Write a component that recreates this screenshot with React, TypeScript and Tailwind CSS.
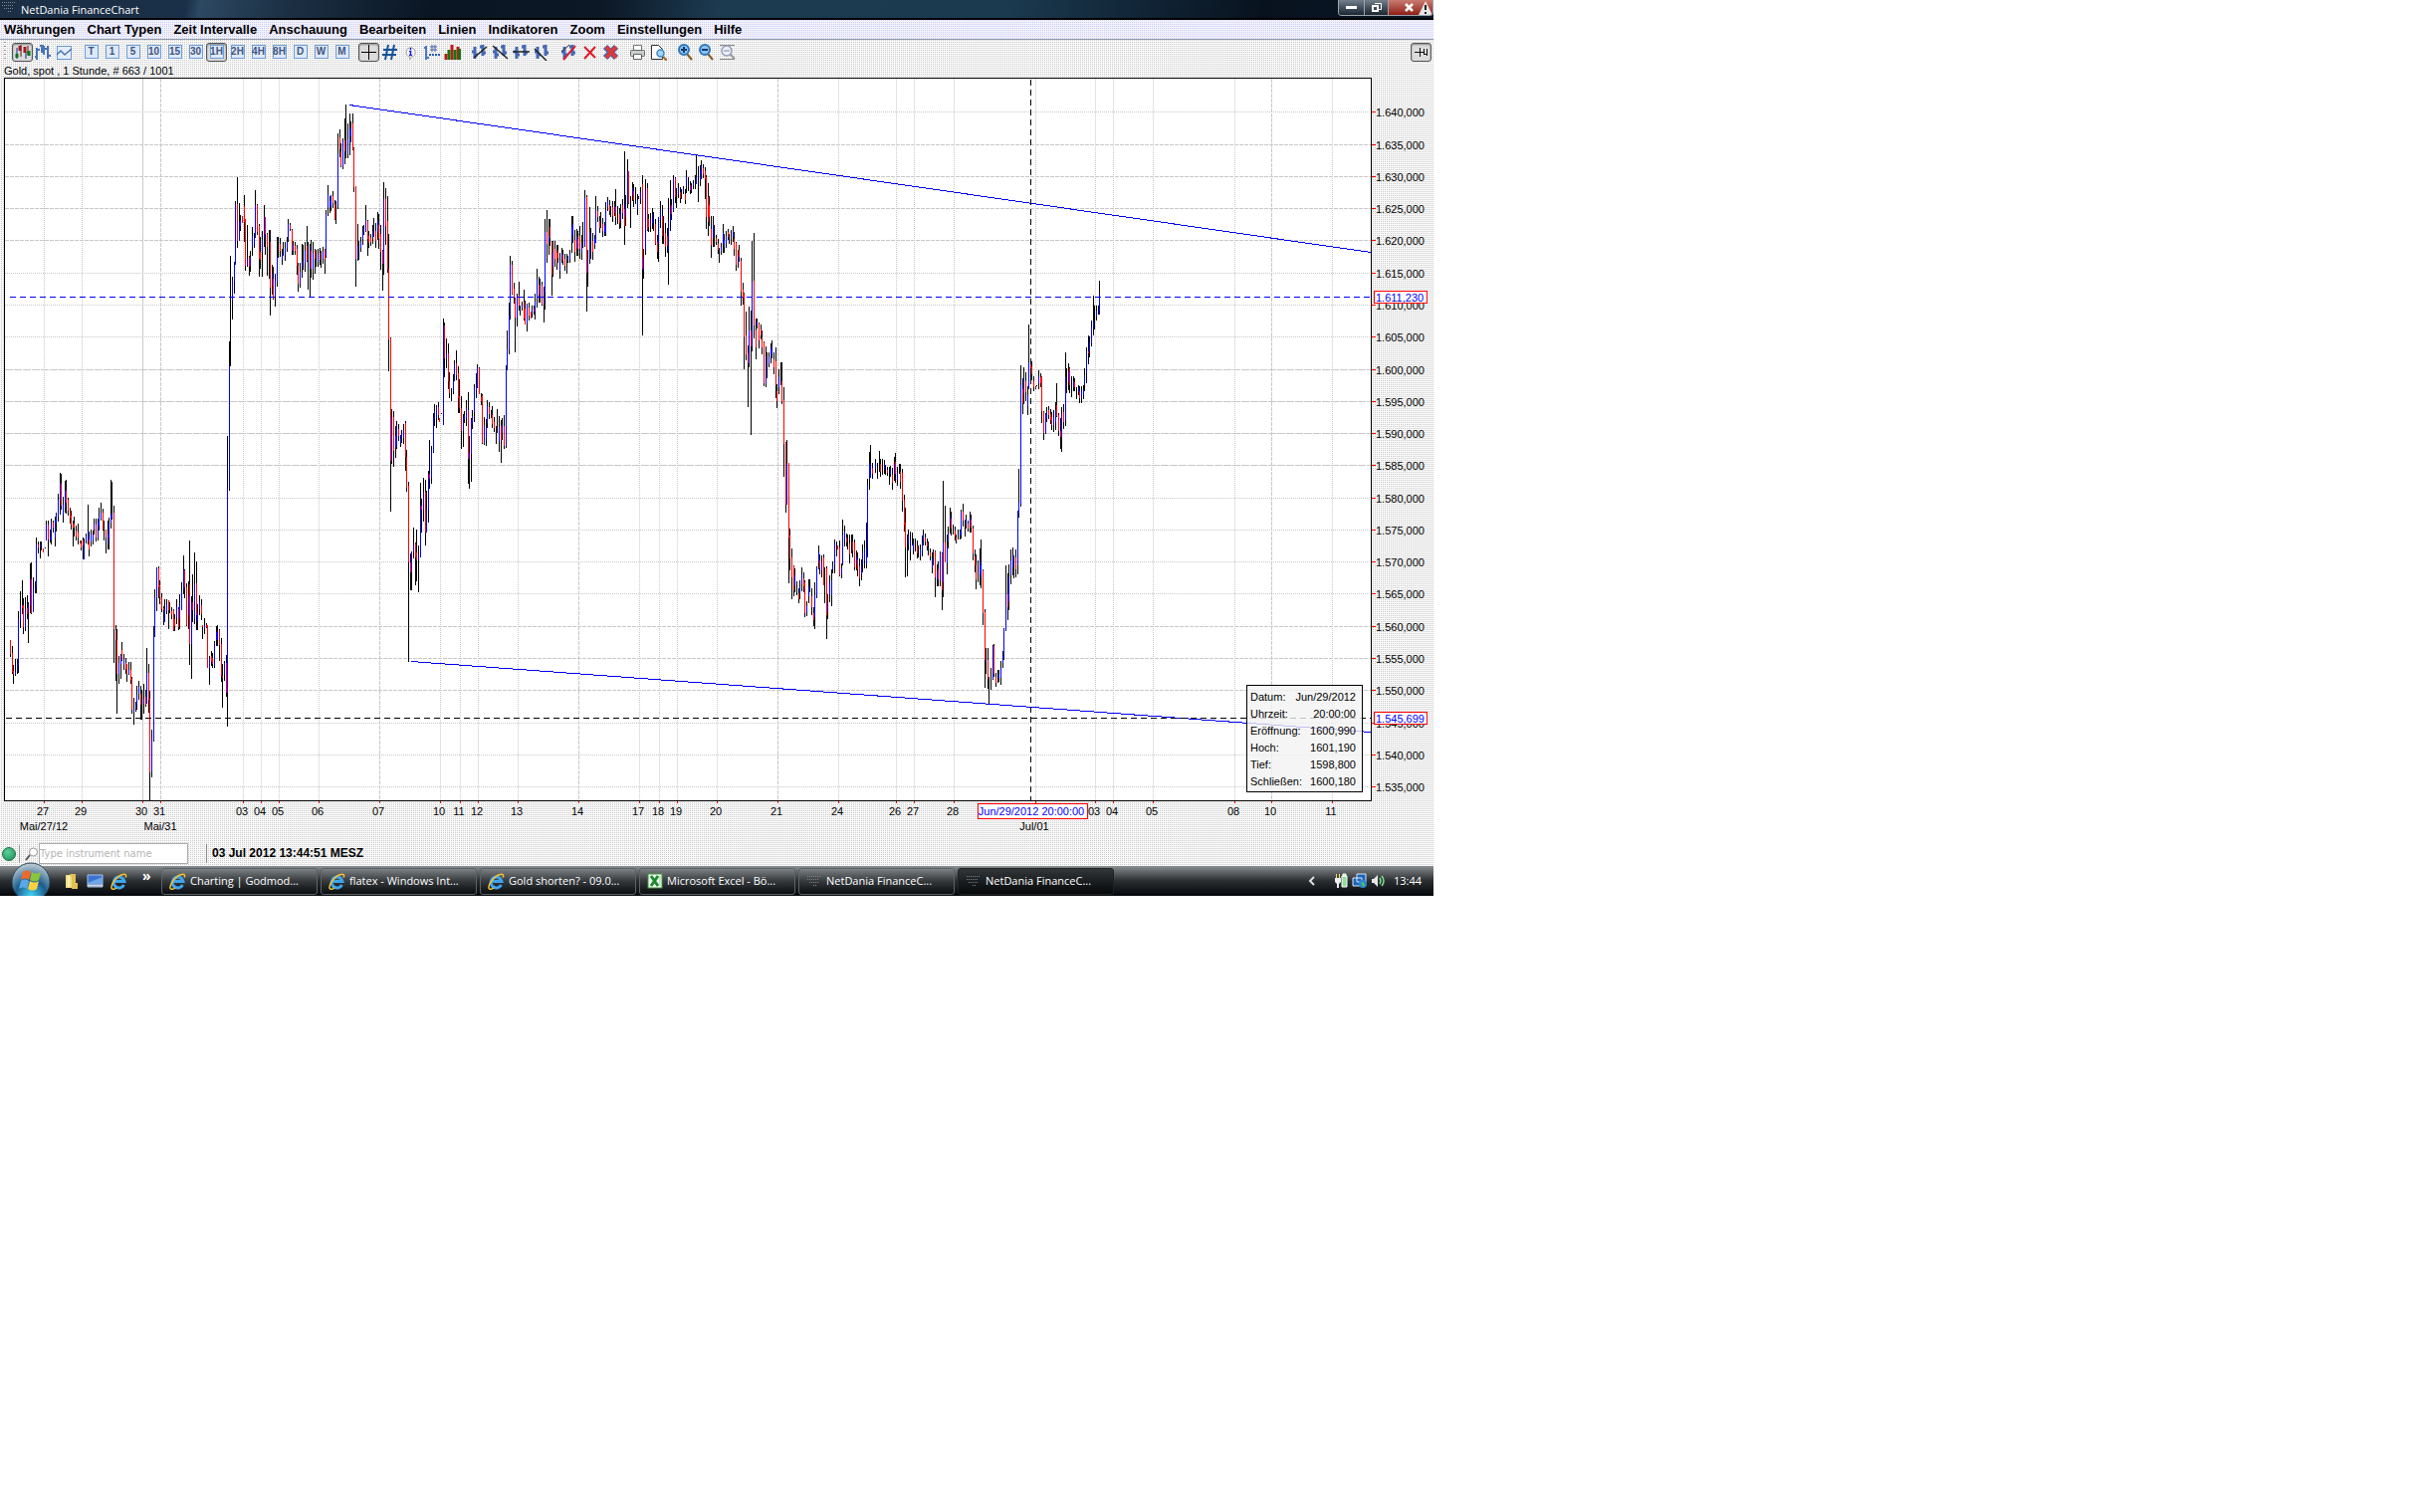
import type { ReactNode } from "react"
import clsx from "clsx"

type Dash = "dots" | "dash" | "long" | "solid"

const MENU = [
  "Währungen",
  "Chart Typen",
  "Zeit Intervalle",
  "Anschauung",
  "Bearbeiten",
  "Linien",
  "Indikatoren",
  "Zoom",
  "Einstellungen",
  "Hilfe",
]

const INTERVALS = ["T", "1", "5", "10", "15", "30", "1H", "2H", "4H", "8H", "D", "W", "M"]

const DASHES: Record<Dash, string | undefined> = {
  dots: "1 1",
  dash: "4 1",
  long: "8 1",
  solid: undefined,
}

const PRICES: [number, string, Dash][] = [
  [112, "1.640,000", "dots"],
  [145, "1.635,000", "dash"],
  [177, "1.630,000", "dash"],
  [209, "1.625,000", "dash"],
  [241, "1.620,000", "dash"],
  [274, "1.615,000", "dots"],
  [306, "1.610,000", "dots"],
  [338, "1.605,000", "dots"],
  [371, "1.600,000", "long"],
  [403, "1.595,000", "long"],
  [435, "1.590,000", "long"],
  [467, "1.585,000", "long"],
  [500, "1.580,000", "dots"],
  [532, "1.575,000", "dots"],
  [564, "1.570,000", "dots"],
  [596, "1.565,000", "dots"],
  [629, "1.560,000", "dash"],
  [661, "1.555,000", "dash"],
  [693, "1.550,000", "dash"],
  [726, "1.545,000", "dots"],
  [758, "1.540,000", "dots"],
  [790, "1.535,000", "dots"],
]

const DAYS: [number, string, Dash][] = [
  [44, "27", "dots"],
  [82, "29", "dots"],
  [143, "30", "solid"],
  [161, "31", "dash"],
  [244, "03", "dots"],
  [262, "04", "dots"],
  [280, "05", "dots"],
  [320, "06", "dots"],
  [381, "07", "dash"],
  [442, "10", "dots"],
  [462, "11", "dots"],
  [480, "12", "dots"],
  [520, "13", "dots"],
  [581, "14", "dash"],
  [642, "17", "dots"],
  [662, "18", "dots"],
  [680, "19", "dots"],
  [720, "20", "dots"],
  [781, "21", "dash"],
  [842, "24", "dots"],
  [900, "26", "dots"],
  [918, "27", "dots"],
  [958, "28", "dots"],
  [1040, "", "dots"],
  [1100, "03", "dots"],
  [1118, "04", "dots"],
  [1158, "05", "dots"],
  [1240, "08", "dots"],
  [1277, "10", "dash"],
  [1338, "11", "dots"],
]

// One bar each: x, high, low, direction (u, d or n), then the body when it is known
const BARS = `
10 643 660 d 643 657;12 649 677 d 656 675;13 668 687 d 674 677;15 662 679 u 675 677;17 662 677 u 667 675
18 614 676 u 622 668;20 594 631 u 608 623;22 583 617 d 608 611;23 601 637 d 608 630;25 600 634 u 612 630
27 598 622 d 611 617;28 605 646 u 607 615;30 566 616 u 582 608;31 565 617 d 582 616;33 580 615 u 592 615
35 584 596 u 590 593;36 540 596 u 547 590;38 544 556 d 547 550;40 544 561 u 547 550;41 544 553 n
43 551 555 d 551 555;45 550 551 n;46 523 543 u 527 543;48 523 559 d 527 542;50 532 545 u 540 543
51 521 547 u 525 542;53 523 535 d 525 530;55 519 549 u 523 540;56 515 534 u 517 525;58 496 524 u 503 518
60 475 517 u 485 503;61 476 512 d 486 508;63 499 525 u;65 483 515 u 493 510;66 482 516 d 493 505
68 500 518 d 502 513;70 510 526 d 513 520;71 513 532 d 518 527;73 523 549 d 526 530;74 519 539 d 526 530
76 528 543 d;78 526 547 d 535 540;80 543 546 d 543 546;81 543 553 d;83 540 562 d 543 548
84 541 562 u 545 562;86 536 546 u;88 507 547 u 533 545;89 534 559 d;91 532 549 u;93 533 547 u
94 521 537 u;96 521 544 d 527 540;98 521 543 u 525 540;99 510 533 u 520 528;101 505 523 u 515 521
103 511 533 d 515 532;104 523 543 n;106 532 556 d 532 540;108 523 552 u 537 547;109 520 552 u 525 540
111 482 531 u 517 525;112 484 522 u 515 520;114 508 666 d 515 632;116 628 684 d 633 643;117 632 717 d 643 677
119 659 687 u 666 677;121 657 682 u 658 667;122 645 664 d 653 663;124 657 673 u;126 661 677 d
127 667 685 d 667 677;129 665 678 u 673 677;131 665 687 d 673 683;132 680 717 d 682 713;134 701 728 u 713 715
136 705 715 u;137 689 713 u 698 708;139 684 703 u;141 689 723 d 697 708;142 693 723 n
144 687 717 u 702 707;146 693 710 d 700 708;147 651 707 u 676 707;149 667 716 d 676 703;150 694 804 d 702 776
152 733 781 u 743 775;154 629 745 u 638 743;155 592 640 u 600 638;157 570 614 u 571 600;159 569 601 d 571 590
160 583 607 d 588 600;162 596 615 d 600 612;164 609 628 d 611 613;165 602 625 u 612 625;167 602 617 u
169 603 632 d 603 613;170 605 616 n;172 610 622 d;174 612 634 d 613 633;175 617 634 d;177 602 627 u
179 610 633 d 612 630;180 597 632 u;182 585 613 u 593 613;184 558 597 u 573 592;185 572 601 d 573 590
187 586 629 d 590 628;189 584 632 u;190 543 668 d 587 647;192 599 682 u 605 647;193 577 625 d 605 613
195 555 627 u 587 622;197 564 633 d 586 618;198 607 633 u;200 598 618 u;202 602 623 d;203 628 642 d 628 630
205 621 637 u 628 631;207 626 631 d;208 628 671 d 628 671;210 659 688 u 661 671;212 654 669 d;213 656 671 d
215 644 671 u 646 669;217 629 649 u;218 628 649 u;220 632 664 d 633 648;222 641 685 d 647 679;223 667 711 d 679 681
225 664 684 u 666 678;227 658 700 d 666 696;228 438 730 u 491 696
230 343 493 u 367 491;231 257 368 n;233 278 321 u 281 302;235 263 295 u 266 283;236 202 266 u 205 266
238 178 249 d 205 242;240 204 242 u 223 242;241 216 232 u;243 217 224 d 217 224;245 196 243 d 207 223
246 220 272 d 220 267;248 226 268 u 260 267;250 257 277 d 258 268;251 252 273 u;253 228 257 u;255 234 249 u
256 191 239 u 206 238;258 205 236 d 206 233;260 225 278 d 227 260;261 238 270 d 253 261;263 232 278 u 241 253
265 206 248 u 218 240;266 218 256 d 218 235;268 234 277 d 235 248;270 231 280 n;271 231 317 d 243 289
273 266 296 u;274 268 301 d 280 300;276 275 308 u 282 298;278 238 288 u 258 283;279 238 259 n;281 239 258 d
283 250 266 u;284 243 257 n;286 243 262 u;288 238 253 u;289 220 243 u 225 240;291 224 232 d
293 230 256 d 231 252;294 242 256 u;296 243 256 d;298 246 276 d 250 267;299 264 293 d 267 285
301 264 289 u 273 285;303 245 279 u 262 270;304 246 271 n;306 243 273 u;308 227 263 d 247 262;309 243 291 n
311 245 298 u 247 270;312 241 279 d 252 270;314 243 281 u;316 250 275 d 251 260;317 251 268 n;319 250 268 u
321 249 266 d;322 252 269 n;324 248 265 u;326 250 275 d 251 260;327 211 259 u 215 258;329 186 217 u
331 197 214 u;332 196 212 u 196 206;334 192 209 d;336 201 221 d 205 220;337 202 225 n;339 134 210 u 154 207
341 130 158 d;342 144 168 d 152 167;344 139 170 u 142 167;346 119 165 d 141 152;347 105 159 n
349 124 159 u 140 155;351 114 156 u 130 143;352 122 143 u;354 114 151 d 124 150;355 148 193 d 149 188
357 187 288 d 187 260;359 225 262 u 247 260;360 242 261 n;362 238 253 u;364 227 246 u;365 226 236 u
367 206 233 u 221 232;369 221 257 d 222 240;370 232 249 d;372 235 247 d;374 226 245 u;375 219 238 n
377 224 249 d;379 213 241 u;380 215 250 d;382 226 271 d 235 253;384 251 292 d 252 265;385 183 276 u 200 265
387 189 246 d 200 227;389 197 274 d 222 270;390 235 373 d 270 341;392 339 514 d 340 463
393 411 466 u 419 463;395 413 469 d 419 453;397 428 460 u;398 423 451 u 427 448;400 426 443 d;402 437 449 u
403 432 445 u;405 426 446 u;407 423 473 d 425 459;408 452 494 d 459 490;410 484 665 d 488 565
412 556 593 d 565 575;413 554 593 u 555 575;415 530 561 u 547 555;417 545 588 d 546 560;418 532 584 d 555 563
420 548 595 u 557 563;422 485 560 u 508 559;423 501 535 d 508 512;425 480 524 u 494 512;427 482 548 d 494 535
428 493 535 u 511 535;430 473 525 u 476 512;431 442 491 d 476 481;433 448 486 u 453 480;435 415 455 u 420 454
436 406 428 u;438 407 430 u 408 420;440 404 422 d;441 420 424 d 420 424;443 415 416 n;445 320 427 u 327 427
446 324 379 d 327 360;448 340 370 u 355 360;450 345 391 d 355 383;451 374 400 d 383 395;453 390 403 n
455 376 396 u 383 393;456 362 383 u 365 383;458 352 382 d 365 377;460 368 415 d 375 400;461 381 415 d 398 410
463 398 451 d 410 433;465 416 449 u 420 433;466 413 425 u;468 402 428 u;470 394 486 d 412 461
471 438 491 u 455 461;473 420 484 u 422 456;474 412 431 u;476 386 424 u 390 415;478 375 400 u 387 392
479 366 390 u 369 388;481 369 396 d 370 396;483 395 407 d;484 396 446 d 397 445;486 419 447 u 427 445
488 421 448 u;489 402 430 u 408 425;491 404 421 d;493 412 420 n;494 408 430 d 417 426;496 419 434 d
498 428 446 n;499 411 435 n;501 418 454 u;503 422 465 d 428 442;504 420 442 u;506 417 451 d 428 448
508 367 450 u 371 448;509 332 372 u 351 371;511 304 356 u 317 351;512 257 321 u 266 317;514 262 296 d 266 295
516 284 305 d;517 299 354 d 300 319;519 295 328 u 297 319;521 283 312 d 297 307;522 307 317 n;524 303 312 u
526 291 322 d 303 320;527 302 326 d 310 326;529 305 333 u 306 325;531 304 322 d;533 313 320 d 313 320
534 307 319 u;536 307 316 d;537 295 321 u;539 270 309 u 280 300;541 278 304 d;542 280 304 u;544 283 307 d 286 306
546 288 324 u 292 306;547 220 311 u 233 293;549 211 264 d 233 245;551 220 256 u 237 243;552 220 247 d
554 242 297 d 243 276;555 242 278 u;557 242 268 d;559 246 271 d;560 246 264 d;562 254 280 u;564 249 264 u
565 251 266 d;567 255 272 d;569 255 275 n;570 257 264 u;572 251 264 u;574 217 254 u;575 217 244 u
577 231 263 d;579 230 257 u;580 232 257 d;582 227 260 d;584 236 261 u;585 223 249 n;587 191 248 u 199 247
589 196 313 d 198 274;590 251 288 u 260 273;592 208 265 u 233 260;593 229 260 n;595 234 261 d;597 236 250 u
598 197 244 u 211 243;600 207 223 d;602 217 234 d;603 213 229 n;605 219 238 d;607 223 237 u;608 203 237 u 211 235
610 198 212 u;612 201 216 d;613 207 218 n;615 202 223 d;617 202 217 u;618 190 226 d 208 218;620 207 225 n
622 209 230 d;623 205 229 u;625 200 220 d;627 152 246 d 210 227;628 196 227 u;630 160 209 u 172 205
631 172 205 d 172 204;633 197 229 n;635 183 202 u;636 185 208 d;638 188 205 n;640 195 216 u;641 197 200 d
643 188 205 u;645 176 337 d 185 270;646 250 280 u;648 180 256 u 190 251;650 184 232 d 189 231;651 215 233 d
653 214 233 u;655 209 230 u;656 213 232 n;658 220 246 d 225 245;660 236 260 d;661 218 263 u 218 245
663 202 229 u;665 206 245 d 217 237;666 217 245 n;668 224 258 d;670 229 254 d;671 199 286 u 221 252
673 181 232 u 207 222;674 200 221 d;676 176 213 u 179 212;678 178 204 d 179 198;679 189 209 n;681 184 199 u
683 188 204 d;684 190 200 n;686 187 195 u;688 190 205 d;689 171 194 u;691 178 192 n;693 182 195 d;694 184 194 u
696 181 190 u;698 176 190 n;699 155 185 u 178 185;701 167 203 n;703 166 187 u;704 161 180 u;706 165 179 d
708 168 200 d 172 180;709 176 230 d 178 218;711 184 237 d 198 223;712 197 227 d;714 217 259 d;716 217 248 u
717 226 248 n;719 236 246 d;721 240 255 d;722 249 264 n;724 244 256 u;726 225 254 u;727 235 254 u;729 232 249 u
731 230 241 d;732 235 245 n;734 231 246 n;736 227 243 u;737 233 257 d;739 243 272 d 244 266;741 251 269 u
742 246 263 d;744 259 307 d 262 293;746 284 306 d;747 294 371 d 295 338;749 313 362 d 337 356;751 347 409 d 355 365
752 308 369 u 332 365;754 312 437 d 332 348;755 242 353 u 283 348;757 234 340 d 282 327;759 320 361 d;760 320 330 u
762 324 350 d 325 342;764 326 341 d;765 332 356 d;767 343 388 d 344 385;769 348 389 u 358 386;770 354 380 n
772 354 369 u;774 345 365 u;775 342 360 u;777 354 376 d;779 349 400 d 363 387;780 386 410 d;782 371 396 u
784 364 387 n;785 364 406 d 383 403;787 389 479 d 402 446
789 444 515 d 445 507;790 442 507 u 466 507;792 465 586 d 465 540;793 531 573 d 538 561;795 551 602 d 560 580
797 568 599 d 569 593;798 571 595 u;800 584 598 n;802 591 606 d;803 583 602 u;805 570 594 u;807 575 595 d
808 583 620 d 585 616;810 604 619 u;812 582 606 u;813 582 595 n;815 591 618 d;817 610 629 d;818 585 632 u 598 620
820 569 601 u 570 598;822 548 572 u;823 557 577 d;825 558 580 u;827 557 588 d 560 588;828 570 606 n
830 569 642 d 571 618;831 597 622 u;833 578 605 u;835 572 609 u;836 564 576 u;838 542 576 u 546 567
840 544 559 n;841 548 552 d 548 552;843 543 579 d 550 578;845 566 581 u;846 522 568 u 537 567;848 528 549 u
850 536 549 d;851 537 552 n;853 537 566 d;855 537 556 n;856 537 560 d;858 542 573 d 545 570;860 553 573 u
861 555 579 d;863 561 589 d;865 562 583 u;866 547 575 u;868 543 571 u;870 525 571 u 550 567;871 481 560 u 487 550
873 454 492 u;874 447 480 u 467 480;876 465 481 d;879 461 475 u;881 465 481 n;883 453 474 n;884 461 479 d
886 461 477 n;888 462 476 u;889 467 477 n;891 469 478 d;893 469 487 n;894 468 479 u;896 470 492 d;898 459 483 u
899 455 485 d;901 469 488 u;903 466 476 n;904 466 491 d;906 471 514 d 475 503;908 497 534 d 502 527
909 510 580 d 525 550;911 537 579 n;912 532 553 u;914 534 563 u;916 535 548 n;917 541 557 u;919 541 554 n
921 543 561 d;922 548 560 n;924 547 563 u;926 538 559 u;927 532 548 u;929 536 548 d;931 541 553 d;932 544 558 n
934 551 563 d;936 555 576 u;937 552 568 n;939 553 600 d 554 580;941 567 589 u;942 564 589 d;944 554 589 u 556 583
946 555 613 d 556 593;947 483 600 u 545 585;949 508 565 d 545 565;951 537 577 u;952 529 551 u;954 510 536 u
955 514 538 d;957 527 537 n;959 529 543 d;960 537 546 d;962 532 542 n;964 532 542 u;965 512 541 u 514 537
967 506 529 d 514 523;969 522 539 n;970 517 531 u;972 523 534 d;974 514 535 u;975 517 535 d;977 528 563 d 531 556
979 552 575 d;980 557 592 d;982 563 585 n;984 551 588 u;985 542 591 u 568 580;987 572 628 d 573 616
989 612 691 d 615 663;990 651 677 u 663 665;992 651 692 d 663 682;993 680 707 n;995 671 693 n;997 648 683 u 649 682
998 647 680 d 649 677;1000 676 690 d;1002 673 686 n;1003 673 685 u;1005 664 688 u;1007 654 671 u;1008 631 663 u 632 660
1010 568 634 u 596 633;1012 576 623 d 597 610;1013 567 613 u 580 605;1015 552 587 u;1017 550 578 u;1018 558 581 n
1020 552 580 d;1022 513 577 u 515 568;1023 471 520 u 505 516;1025 367 509 u 387 506;1027 380 416 d;1028 369 406 u
1030 374 403 d;1032 388 417 u;1033 326 391 u 364 390;1035 360 380 d;1036 363 382 d;1038 378 393 d;1040 388 391 d
1041 387 388 n;1043 372 391 u;1045 375 389 d;1046 378 425 d 378 413;1048 413 442 d 414 435;1050 415 436 u 417 435
1051 409 424 u;1053 408 421 d;1055 411 426 d;1056 414 432 d;1058 412 434 u;1060 404 432 u;1061 385 419 d 407 418
1063 415 438 d 417 433;1065 420 451 d 433 439;1066 409 454 u 416 439;1068 406 431 d;1070 354 428 u 379 422
1071 370 395 n;1073 365 392 u;1074 369 395 d 370 387;1076 378 399 n;1078 378 393 u;1079 380 393 d;1081 389 401 n
1083 387 397 u;1084 388 405 d;1086 388 405 u;1088 387 401 u;1089 370 393 u;1091 349 385 u 353 375;1093 337 366 d 353 355
1094 338 359 u;1096 322 348 u 328 345;1098 297 337 u 322 330;1099 307 331 n;1101 307 322 u;1103 307 316 n
1104 282 316 u 295 315
`
  .trim()
  .split(/[;\n]/)
  .map((row) => {
    const [x, high, low, dir, top, bottom] = row.split(" ")
    const h = Number(high)
    const l = Number(low)
    return {
      x: Number(x),
      high: h,
      low: l,
      dir,
      top: top ? Number(top) : Math.round(h + (l - h) * 0.3),
      bottom: bottom ? Number(bottom) : Math.round(h + (l - h) * 0.7),
    }
  })

const QUOTE = [
  ["Datum:", "Jun/29/2012"],
  ["Uhrzeit:", "20:00:00"],
  ["Eröffnung:", "1600,990"],
  ["Hoch:", "1601,190"],
  ["Tief:", "1598,800"],
  ["Schließen:", "1600,180"],
]

function ToolButton({
  label,
  active,
  children,
}: {
  label: string
  active?: boolean
  children: ReactNode
}) {
  return (
    <button
      type="button"
      aria-label={label}
      className={clsx(
        "flex h-[19px] w-[21px] shrink-0 items-center justify-center",
        active && "rounded-[3px] border border-[#555] bg-[#dcdcdc] shadow-[inset_0_1px_2px_#888]"
      )}
    >
      {children}
    </button>
  )
}

function Icon({ children }: { children: ReactNode }) {
  return (
    <svg width="17" height="17" viewBox="0 0 17 17" fill="none" className="shrink-0">
      {children}
    </svg>
  )
}

// The pair of blue bars that all line tools share
function LineBars() {
  return (
    <path
      d="M4 3v12M1 8h3M4 11h3M12 1v11M9 3h3M12 9h3"
      stroke="#4468b4"
      strokeWidth="3"
    />
  )
}

function Magnifier({ sign }: { sign: string }) {
  return (
    <Icon>
      <path d="M10 10l5 6" stroke="#8a5a22" strokeWidth="2" />
      <circle cx="7" cy="6" r="5" fill="#8cc4ee" stroke="#2f78bb" strokeWidth="2" />
      <path d={sign} stroke="#123c72" strokeWidth="2" />
    </Icon>
  )
}

function Toolbar() {
  return (
    <div className="flex h-6 items-center gap-1.5 pr-[2px] pl-[4px]">
      <span className="h-5 w-[2px] bg-[repeating-linear-gradient(#999_0_1px,transparent_1px_4px)]" />
      <div className="flex">
        <ToolButton label="Kerzen" active>
          <Icon>
            <path d="M3 4v11M12 8v7" stroke="#0a2a8a" />
            <path d="M7 1v12M14 2v9" stroke="#611" />
            <path d="M3 10v4M15 7v5" stroke="#067a1c" strokeWidth="3" />
            <path d="M6 2v5M11 3v6" stroke="#9b1c24" strokeWidth="3" />
          </Icon>
        </ToolButton>
        <ToolButton label="Balken">
          <Icon>
            <path d="M2 4v12M0 13h2M2 6h3M7 1v8M5 2h4M9 2v9M13 2v13M10 5h3M13 12h3" stroke="#4a73b8" strokeWidth="2" />
          </Icon>
        </ToolButton>
        <ToolButton label="Linie">
          <Icon>
            <rect x="1.5" y="2.5" width="14" height="13" fill="#e4eefb" stroke="#6a9ad8" />
            <path d="M1 11l4-4 4 4 7-6" stroke="#4a73a8" strokeWidth="1.5" />
          </Icon>
        </ToolButton>
      </div>
      <div className="flex">
        {INTERVALS.map((label) => (
          <ToolButton key={label} label={label} active={label === "1H"}>
            <span className="flex size-[14px] items-center justify-center border border-[#6d9edb] bg-[#dfe9f6] text-[10px] leading-none font-bold text-[#3f5583]">
              {label}
            </span>
          </ToolButton>
        ))}
      </div>
      <div className="flex">
        <ToolButton label="Fadenkreuz" active>
          <Icon>
            <path d="M8.5 1v15M1 8.5h15" stroke="#000" />
          </Icon>
        </ToolButton>
        <ToolButton label="Gitter">
          <Icon>
            <path d="M7 1L4 16M13 1l-3 15M2 6h14M1 11h14" stroke="#14529a" strokeWidth="2" />
          </Icon>
        </ToolButton>
        <ToolButton label="Info">
          <Icon>
            <path d="M8.500 3.500a5 5 0 0 1 1 9.800l-2 2.700v-2.800a5 5 0 0 1 1-9.700z" fill="#f4f4f4" stroke="#aaa" />
            <path d="M8.500 4v2M7 7.500h1.500V11M7 11.500h3" stroke="#22d" strokeWidth="1.500" />
          </Icon>
        </ToolButton>
        <ToolButton label="Skala">
          <Icon>
            <path d="M3 2v14M1 4h2M3 14h3" stroke="#4a78c4" strokeWidth="2" />
            <path d="M9 1v7M12 1v7M7 3h7M7 6h7" stroke="#4a68a8" />
            <path d="M6 11h11" stroke="#2a58c0" strokeWidth="2" strokeDasharray="2 1" />
          </Icon>
        </ToolButton>
        <ToolButton label="Volumen">
          <Icon>
            <path d="M2 16v-6M8 16V1M14 16V3" stroke="#c01818" strokeWidth="3" />
            <path d="M5 16V6M11 16V6M16 16V5" stroke="#0b7a12" strokeWidth="3" />
          </Icon>
        </ToolButton>
      </div>
      <div className="flex">
        {["M3 14L16 3", "M1 2l15 13", "M0 8h17", "M1 5l12 12"].map((d) => (
          <ToolButton key={d} label="Trendlinie">
            <Icon>
              <LineBars />
              <path d={d} stroke="#222" strokeWidth="1.500" />
            </Icon>
          </ToolButton>
        ))}
      </div>
      <div className="flex">
        <ToolButton label="Linie bearbeiten">
          <Icon>
            <LineBars />
            <path d="M1 8l8-7" stroke="#333" />
            <path d="M3 16L15 2" stroke="#d8202c" strokeWidth="2" />
          </Icon>
        </ToolButton>
        <ToolButton label="Linie löschen">
          <Icon>
            <path d="M3 3l11 11M14 3L3 15" stroke="#e01828" strokeWidth="2" />
          </Icon>
        </ToolButton>
        <ToolButton label="Alle löschen">
          <Icon>
            <path d="M3 3l11 11M14 3L3 14" stroke="#4a68b0" strokeWidth="6" />
            <path d="M4 3l10 11M14 3L4 14" stroke="#d83a3a" strokeWidth="4" />
          </Icon>
        </ToolButton>
      </div>
      <div className="flex">
        <ToolButton label="Drucken">
          <Icon>
            <path d="M4.500 6V1.500h8V6" fill="#fff" stroke="#777" />
            <rect x="1.500" y="6.500" width="14" height="6" rx="1" fill="#c9ced0" stroke="#666" />
            <path d="M4.500 10.500h8v5h-8z" fill="#fff" stroke="#666" />
          </Icon>
        </ToolButton>
        <ToolButton label="Vorschau">
          <Icon>
            <path d="M1.500 1.500h7l4 4v10h-11z" fill="#fff" stroke="#333" />
            <path d="M13 13l4 4" stroke="#a06a28" strokeWidth="2" />
            <circle cx="10.500" cy="9.500" r="3.500" fill="#a6d4f4" stroke="#3a86c8" strokeWidth="1.500" />
          </Icon>
        </ToolButton>
      </div>
      <div className="flex">
        <ToolButton label="Vergrößern">
          <Magnifier sign="M7 3v6M4 6h6" />
        </ToolButton>
        <ToolButton label="Verkleinern">
          <Magnifier sign="M4 6h6" />
        </ToolButton>
        <ToolButton label="Zoom zurücksetzen">
          <Icon>
            <path d="M1 1.500h15M1 15.500h15" stroke="#888" />
            <path d="M11 10l5 5" stroke="#999" strokeWidth="2" />
            <circle cx="8" cy="7" r="5" fill="#eef0f8" stroke="#949cb8" strokeWidth="1.500" />
            <path d="M5 7h6" stroke="#7a84a4" />
          </Icon>
        </ToolButton>
      </div>
      <div className="ml-auto">
        <ToolButton label="Anheften" active>
          <Icon>
            <path d="M2 8.500h6M7.500 4v9M8 8.500h3M11 10.500h3M11.500 5v6M14.500 5v7" stroke="#111" />
          </Icon>
        </ToolButton>
      </div>
    </div>
  )
}

function Chart() {
  return (
    <svg viewBox="0 78 1440 767" className="block w-full text-[11px]" shapeRendering="crispEdges">
      <rect x="4" y="78" width="1373" height="726" fill="#fff" />
      {PRICES.map(([y, label, dash]) => (
        <g key={label}>
          <path d={`M5 ${y}.5H1377`} stroke="#c8c8c8" strokeDasharray={DASHES[dash]} />
          <path d={`M1378 ${y}.5h4`} stroke="#f00" />
          <text x="1382" y={y + 5}>
            {label}
          </text>
        </g>
      ))}
      {DAYS.map(([x, label, dash]) => (
        <g key={x}>
          <path d={`M${x}.5 79V804`} stroke="#c8c8c8" strokeDasharray={DASHES[dash]} />
          <path d={`M${x}.5 805v2`} stroke="#f00" />
          <text x={x - 1} y="819" textAnchor="middle">
            {label}
          </text>
        </g>
      ))}
      <text x="44" y="834" textAnchor="middle">Mai/27/12</text>
      <text x="161" y="834" textAnchor="middle">Mai/31</text>
      <text x="1039" y="834" textAnchor="middle">Jul/01</text>

      {BARS.map((bar) => (
        <g key={bar.x}>
          <rect x={bar.x} y={bar.high} width="1" height={bar.low - bar.high} />
          {bar.dir !== "n" && (
            <rect
              x={bar.x}
              y={bar.top}
              width="1"
              height={bar.bottom - bar.top}
              fill={bar.dir === "u" ? "#00f" : "#f00"}
            />
          )}
        </g>
      ))}

      <path d="M351 105.500L1377 253.500M413 664.500L1377 735.500" stroke="#00f" />
      <path d="M10 298.500H1377" stroke="#00f" strokeDasharray="6 4" />
      <path d="M6 721.500H1377" stroke="#000" strokeDasharray="6 4" />
      <path d="M1035.500 80V804" stroke="#000" strokeDasharray="6 4" />
      <path d="M4.500 804.500V78.500H1377.500V804.500z" fill="none" stroke="#000" />

      <g fill="#fff" stroke="#f00">
        <rect x="1380.500" y="292.500" width="53" height="12" />
        <rect x="1380.500" y="715.500" width="53" height="12" />
        <rect x="982.500" y="807.500" width="110" height="15" />
      </g>
      <g fill="#00f">
        <text x="1382" y="303">1.611,230</text>
        <text x="1382" y="726">1.545,699</text>
        <text x="1036" y="819" textAnchor="middle">Jun/29/2012 20:00:00</text>
      </g>
    </svg>
  )
}

function QuoteBox() {
  return (
    <dl className="absolute right-[71px] bottom-[49px] w-[117px] border border-black bg-[#f3f3f3]/80 pt-[3px] pr-[6px] pb-px pl-[3px] text-[11px] leading-[17px]">
      {QUOTE.map(([name, value]) => (
        <div key={name} className="flex justify-between">
          <dt>{name}</dt>
          <dd>{value}</dd>
        </div>
      ))}
    </dl>
  )
}

function ExplorerIcon() {
  return (
    <svg width="17" height="17" viewBox="0 0 17 17" fill="none" className="shrink-0">
      <path d="M13.500 12a5.500 5.500 0 1 1 .5-3.500H4" stroke="#3fa4ee" strokeWidth="3" />
      <path d="M1.500 16C-1 13 6 3 12.500 1.500c3-.8 3.500 1 2.800 3M1.500 16c1 .7 3 0 4.500-1" stroke="#f4c430" strokeWidth="1.500" />
    </svg>
  )
}

function ExcelIcon() {
  return (
    <svg width="16" height="16" viewBox="0 0 16 16" className="shrink-0">
      <rect x="1" y="1" width="14" height="14" fill="#f2f8f0" stroke="#3e9a3e" />
      <path d="M4 3l7 10M11 3L4 13" stroke="#1e8a2e" strokeWidth="3" />
      <path d="M13 3v10" stroke="#9bcf9b" />
    </svg>
  )
}

function DotsIcon() {
  return (
    <svg width="16" height="14" viewBox="0 0 16 14" className="shrink-0">
      <path d="M1 2.500h13M1 5.500h12M3 8.500h9M7 11.500h3" stroke="#7b838c" strokeDasharray="1 1" />
    </svg>
  )
}

const TASKS = [
  { label: "Charting | Godmod...", icon: <ExplorerIcon /> },
  { label: "flatex - Windows Int...", icon: <ExplorerIcon /> },
  { label: "Gold shorten? - 09.0...", icon: <ExplorerIcon /> },
  { label: "Microsoft Excel - Bö...", icon: <ExcelIcon /> },
  { label: "NetDania FinanceC...", icon: <DotsIcon /> },
  { label: "NetDania FinanceC...", icon: <DotsIcon />, active: true },
]

function Taskbar() {
  return (
    <div className="relative flex h-[30px] items-center bg-linear-to-b from-[#8a8f92] via-[#2a2e31] via-50% to-[#05080c] font-['Open_Sans',sans-serif] text-[11px] text-white">
      <div className="absolute bottom-0 left-[10px] h-[34px] w-[42px] overflow-hidden">
        <button type="button" aria-label="Start" className="block">
          <svg width="42" height="42" viewBox="0 0 42 42">
            <defs>
              <radialGradient id="orb" cx="0.5" cy="0.85" r="0.8">
                <stop offset="0" stopColor="#3fd0f4" />
                <stop offset="0.5" stopColor="#1c5c8c" />
                <stop offset="1" stopColor="#b4c4d0" />
              </radialGradient>
            </defs>
            <circle cx="21" cy="20" r="19" fill="url(#orb)" stroke="#24445c" />
            <path d="M13 10c3-2 5-2 8 0l-2 8c-3-2-5-2-8 0z" fill="#ee6a2c" />
            <path d="M22 10c3 2 6 2 9 0l-2 8c-3 2-6 2-9 0z" fill="#8cc43c" />
            <path d="M11 19c3-2 5-2 8 0l-2 8c-3-2-5-2-8 0z" fill="#5aa8ea" />
            <path d="M20 19c3 2 6 2 9 0l-2 8c-3 2-6 2-9 0z" fill="#fcd240" />
          </svg>
        </button>
      </div>
      <div className="flex w-[162px] shrink-0 items-center gap-[7px] pl-[64px]">
        <svg width="16" height="16" viewBox="0 0 16 16">
          <path d="M2 2h8v13H2z" fill="#f2dc84" />
          <path d="M6 1h6v9h2v6H8V4z" fill="#e3bf52" />
          <path d="M4 3h2v11H4z" fill="#fff3b8" />
        </svg>
        <svg width="17" height="16" viewBox="0 0 17 16">
          <path d="M1 2h15v12H1z" fill="#3d73cf" stroke="#a9c4e8" />
          <path d="M1 10L16 4v7H1z" fill="#6ea4e8" />
          <path d="M1 12.500h15" stroke="#d4d8dc" strokeWidth="2" />
        </svg>
        <ExplorerIcon />
        <span className="-mt-3 ml-2 text-[14px] font-bold">»</span>
      </div>
      <div className="flex min-w-0 gap-[3px]">
        {TASKS.map((task, i) => (
          <button
            key={i}
            type="button"
            className={clsx(
              "flex h-[27px] w-[157px] min-w-0 items-center gap-1 rounded-[3px] border pl-[7px] whitespace-nowrap",
              task.active
                ? "border-[#222] bg-linear-to-b from-[#33373a] to-[#060809]"
                : "border-[#5c6266] bg-linear-to-b from-[#7d8285] via-[#34383b] via-50% to-[#0b0e11]"
            )}
          >
            {task.icon}
            <span className="truncate">{task.label}</span>
          </button>
        ))}
      </div>
      <div className="ml-auto flex shrink-0 items-center gap-[3px] pr-3">
        <svg width="8" height="10" viewBox="0 0 8 10" fill="none" className="mr-[15px]">
          <path d="M6 1L2 5l4 4" stroke="#ddd" strokeWidth="2" />
        </svg>
        <svg width="15" height="16" viewBox="0 0 15 16">
          <path d="M8 3h5v11H8zM9 1h3v2H9z" fill="#8ce098" stroke="#fff" />
          <path d="M1 5h6v4L5 11v4H3v-4L1 9z" fill="#eee" />
          <path d="M2.500 1v4M5.500 1v4" stroke="#e8e070" />
        </svg>
        <svg width="16" height="16" viewBox="0 0 16 16">
          <path d="M5 1h9v8H5zM1 5h9v8H1z" fill="#1c64b8" stroke="#dce8f4" />
          <circle cx="11" cy="11" r="4" fill="#2c86d8" />
          <path d="M9 9l3 1 1 3-2 1z" fill="#54c04c" />
        </svg>
        <svg width="16" height="16" viewBox="0 0 16 16" fill="none">
          <path d="M1 6h2l4-4v12l-4-4H1z" fill="#e8e8e8" />
          <path d="M9 5q2 3 0 6M11 3q4 5 0 10" stroke="#7ce08c" strokeWidth="1.500" />
        </svg>
        <span className="ml-1">13:44</span>
      </div>
    </div>
  )
}

function TitleBar() {
  return (
    <div className="flex h-5 items-start border-b-2 border-black bg-[linear-gradient(100deg,#1c2f45_0%,#1a3048_13%,#2c4862_14%,#1c3044_20%,#0a1624_30%,#0c1826_42%,#1c3a50_50%,#1b3a50_70%,#08121f_88%,#0a1726_100%)] pl-[1px]">
      <DotsIcon />
      <h1 className="ml-1 flex-1 font-['Open_Sans',sans-serif] text-[11px] leading-[19px] text-white">
        NetDania FinanceChart
      </h1>
      <div className="flex h-4 shrink-0 overflow-hidden rounded-b-[4px] border border-t-0 border-[#9aa5ae]">
        <button type="button" aria-label="Minimieren" className="flex w-[26px] items-center justify-center border-r border-[#9aa5ae] bg-linear-to-b from-[#74818c] to-[#1b2732]">
          <span className="h-[3px] w-[11px] bg-white" />
        </button>
        <button type="button" aria-label="Wiederherstellen" className="flex w-[24px] items-center justify-center border-r border-[#9aa5ae] bg-linear-to-b from-[#74818c] to-[#1b2732]">
          <svg width="12" height="11" viewBox="0 0 12 11" fill="none" stroke="#fff">
            <path d="M4 1.500h6.500v6H8" />
            <path d="M2 4h5v5H2z" strokeWidth="2" />
          </svg>
        </button>
        <button type="button" aria-label="Schließen" className="flex w-[44px] items-center justify-end gap-[4px] bg-linear-to-b from-[#c97b72] to-[#8e1a12]">
          <svg width="11" height="9" viewBox="0 0 11 9" className="shrink-0">
            <path d="M2 1l7 7M9 1L2 8" stroke="#fff" strokeWidth="2.500" />
          </svg>
          <svg width="14" height="14" viewBox="0 0 14 14" className="shrink-0">
            <path d="M7 0l7 14H0z" fill="#e4e4e4" />
            <path d="M7 4v5M7 11v2" stroke="#222" strokeWidth="2" />
          </svg>
        </button>
      </div>
    </div>
  )
}

function StatusBar() {
  return (
    <div className="flex h-[25px] items-center pl-[2px]">
      <span className="size-[14px] rounded-full border border-[#14703f] bg-[radial-gradient(circle_at_40%_35%,#5cd09c,#1a8a54)]" />
      <span className="mx-[3px] h-[18px] w-px bg-[#999]" />
      <label htmlFor="instrument" aria-label="Instrument" className="flex w-4 justify-end">
        <svg width="14" height="14" viewBox="0 0 14 14" fill="none">
          <path d="M5 8l-4 5" stroke="#555" strokeWidth="2" />
          <circle cx="8.500" cy="5" r="4" fill="#fff" stroke="#999" />
        </svg>
      </label>
      <input
        id="instrument"
        type="text"
        placeholder="Type instrument name"
        className="h-[21px] w-[150px] border border-[#aaa] bg-white font-['DejaVu_Sans',sans-serif] text-[10px] placeholder-[#b4b4b4] outline-none"
      />
      <span className="mr-[5px] ml-[18px] h-[19px] w-px bg-[#888]" />
      <p className="text-[12px] leading-[25px] font-bold">03 Jul 2012 13:44:51 MESZ</p>
    </div>
  )
}

export default function App() {
  return (
    <div className="min-h-screen bg-white">
      <div className="w-full max-w-[1440px] bg-[conic-gradient(#ccc_25%,#f8f8f8_0)] bg-[length:2px_2px] font-['Liberation_Sans',Arial,sans-serif] text-black">
        <TitleBar />
        <nav className="flex h-5 items-center gap-3 border-b border-[#8f9ba6] bg-[conic-gradient(#ccccf4_25%,#f2f2fc_0)] bg-[length:2px_2px] pl-1 text-[13px] font-bold">
          {MENU.map((item) => (
            <button key={item} type="button" className="leading-[18px]">
              {item}
            </button>
          ))}
        </nav>
        <Toolbar />
        <p className="h-[14px] pl-1 text-[11px] leading-[15px]">Gold, spot , 1 Stunde, # 663 / 1001</p>
        <div className="relative">
          <Chart />
          <QuoteBox />
        </div>
        <StatusBar />
        <Taskbar />
      </div>
    </div>
  )
}
